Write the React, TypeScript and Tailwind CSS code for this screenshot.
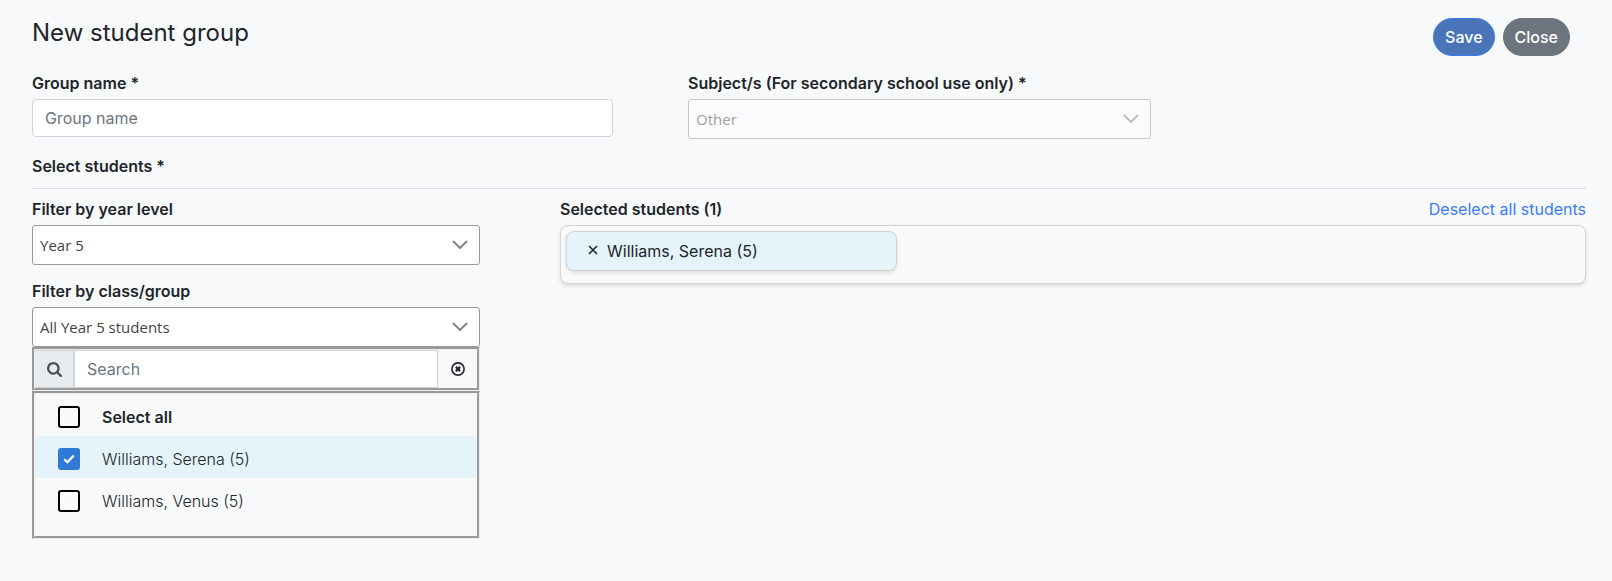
import { useState } from "react";
import type { ReactNode } from "react";
import clsx from "clsx";

const students = [
  { id: 1, name: "Williams, Serena (5)" },
  { id: 2, name: "Williams, Venus (5)" },
];

function ChevronIcon() {
  return (
    <svg
      viewBox="0 0 16 10"
      className="pointer-events-none col-start-1 row-start-1 mr-3 h-[10px] w-4 self-center justify-self-end"
      fill="none"
      stroke="#858585"
      strokeWidth="2"
      strokeLinecap="round"
      strokeLinejoin="round"
    >
      <path d="M1.5 1.5 8 8l6.5-6.5" />
    </svg>
  );
}

function SearchIcon() {
  return (
    <svg viewBox="0 0 1664 1664" className="size-[15px]" fill="#495057">
      <path
        transform="translate(0 -128)"
        d="M1152 832q0-185-131.5-316.5T704 384 387.5 515.5 256 832t131.5 316.5T704 1280t316.5-131.5T1152 832zm512 832q0 52-38 90t-90 38q-54 0-90-38l-343-342q-179 124-399 124-143 0-273.5-55.5t-225-150-150-225T0 832t55.5-273.5 150-225 225-150T704 128t273.5 55.5 225 150 150 225T1408 832q0 220-124 399l343 343q37 37 37 90z"
      />
    </svg>
  );
}

function ClearIcon() {
  return (
    <svg viewBox="0 0 14 14" className="size-[14px]" fill="none" stroke="#212529">
      <circle cx="7" cy="7" r="6.1" strokeWidth="1.6" />
      <path d="m4.9 4.9 4.2 4.2m0-4.2L4.9 9.1" strokeWidth="2.2" />
    </svg>
  );
}

type SelectProps = {
  id: string;
  label: string;
  value: string;
  disabled?: boolean;
};

function SelectField({ id, label, value, disabled }: SelectProps) {
  return (
    <div>
      <label htmlFor={id} className="mb-1 block font-semibold">
        {label}
      </label>
      <div className={clsx("grid", disabled && "opacity-50")}>
        <select
          id={id}
          disabled={disabled}
          className="col-start-1 row-start-1 h-10 w-full appearance-none rounded-[3px] border border-[#999] bg-white px-[7px] font-['Open_Sans',sans-serif] text-[15px] text-[#444] opacity-100"
        >
          <option>{value}</option>
        </select>
        <ChevronIcon />
      </div>
    </div>
  );
}

type CheckRowProps = {
  checked: boolean;
  onChange: () => void;
  children: ReactNode;
};

function CheckRow({ checked, onChange, children }: CheckRowProps) {
  return (
    <label
      className={clsx(
        "flex h-[42px] items-center gap-[22px] pt-1 pl-[23px]",
        checked && "bg-[#e5f4fb]"
      )}
    >
      <span className="grid size-[22px] place-items-center">
        <input
          type="checkbox"
          checked={checked}
          onChange={onChange}
          className="col-start-1 row-start-1 size-[22px] appearance-none rounded-[3px] border-2 border-black bg-[#fafafa] checked:border-[#2f7ad8] checked:bg-[#2f7ad8]"
        />
        {checked && (
          <svg
            viewBox="0 0 12 10"
            className="pointer-events-none col-start-1 row-start-1 h-[10px] w-3"
            fill="none"
            stroke="#fff"
            strokeWidth="2.2"
          >
            <path d="M1.2 5.2 4.4 8.2 10.8 1.5" />
          </svg>
        )}
      </span>
      {children}
    </label>
  );
}

export default function App() {
  const [selected, setSelected] = useState<number[]>([1]);
  const chosen = students.filter((s) => selected.includes(s.id));
  const allSelected = chosen.length === students.length;

  const toggle = (id: number) =>
    setSelected((prev) =>
      prev.includes(id) ? prev.filter((x) => x !== id) : [...prev, id]
    );

  return (
    <main className="min-h-screen bg-[#f8f9fb] pt-[18px] pr-[26px] pb-10 pl-8 font-['Inter',sans-serif] text-base text-[#212529]">
      <header className="flex items-start justify-between pr-4">
        <h1 className="text-2xl leading-[30px]">New student group</h1>
        <div className="flex gap-2">
          <button className="h-[38px] rounded-full border border-[#3b7cf6] bg-[#4a76b9] px-[11px] font-medium text-white">
            Save
          </button>
          <button className="h-[38px] rounded-full border border-[#6c757d] bg-[#6c757d] px-[11px] font-medium text-white">
            Close
          </button>
        </div>
      </header>

      <div className="mt-[15px] grid grid-cols-[581fr_463fr_360fr] gap-[75px]">
        <div>
          <label htmlFor="group-name" className="mb-1 block font-semibold">
            Group name *
          </label>
          <input
            id="group-name"
            placeholder="Group name"
            className="block h-[38px] w-full rounded-sm border border-[#ced4da] bg-white px-3 placeholder:text-[#6c757d]"
          />
        </div>
        <SelectField
          id="subject"
          label="Subject/s (For secondary school use only) *"
          value="Other"
          disabled
        />
      </div>

      <h2 className="mt-[15px] border-b border-[#dcdfe2] pb-[10px] font-semibold">
        Select students *
      </h2>

      <div className="mt-2 grid grid-cols-[448fr_1026fr] gap-20">
        <section>
          <SelectField id="year" label="Filter by year level" value="Year 5" />
          <div className="mt-[14px]">
            <SelectField id="class" label="Filter by class/group" value="All Year 5 students" />
          </div>
          <div className="flex h-[44px] border-[3px] border-[#eee] [border-style:groove]">
            <span className="flex w-10 items-center justify-center border-y border-r-2 border-[#ced4da] bg-[#e9ecef]">
              <SearchIcon />
            </span>
            <input
              type="search"
              aria-label="Search"
              placeholder="Search"
              className="min-w-0 flex-1 border-y border-r border-[#ced4da] bg-white px-3 placeholder:text-[#6c757d]"
            />
            <button aria-label="Clear search" className="flex w-[39px] items-center justify-center">
              <ClearIcon />
            </button>
          </div>
          <div className="border-[3px] border-[#eee] pb-4 [border-style:groove]">
            <CheckRow
              checked={allSelected}
              onChange={() => setSelected(allSelected ? [] : students.map((s) => s.id))}
            >
              <span className="font-semibold">Select all</span>
            </CheckRow>
            {students.map((s) => (
              <CheckRow
                key={s.id}
                checked={selected.includes(s.id)}
                onChange={() => toggle(s.id)}
              >
                <span className="font-light">{s.name}</span>
              </CheckRow>
            ))}
          </div>
        </section>

        <section>
          <div className="mb-1 flex justify-between">
            <h3 className="font-semibold">Selected students ({chosen.length})</h3>
            <a
              href="#"
              onClick={(e) => {
                e.preventDefault();
                setSelected([]);
              }}
              className="text-[#3b7cf6]"
            >
              Deselect all students
            </a>
          </div>
          <ul className="grid min-h-[59px] grid-cols-3 items-start rounded-lg border border-[#d3d3d3] bg-[#fafafa] p-[5px] shadow-[0_2px_4px_rgba(0,0,0,0.12)]">
            {chosen.map((s) => (
              <li
                key={s.id}
                className="mr-[7px] flex h-10 items-center gap-2 rounded-lg border border-[#d3d3d3] bg-[#e5f4fb] pl-5 shadow-[0_2px_4px_rgba(0,0,0,0.12)]"
              >
                <button aria-label={`Remove ${s.name}`} onClick={() => toggle(s.id)}>
                  <svg
                    viewBox="0 0 12 12"
                    className="size-3"
                    fill="none"
                    stroke="#212529"
                    strokeWidth="1.6"
                  >
                    <path d="m2 1 8 8m0-8L2 9" />
                  </svg>
                </button>
                {s.name}
              </li>
            ))}
          </ul>
        </section>
      </div>
    </main>
  );
}
